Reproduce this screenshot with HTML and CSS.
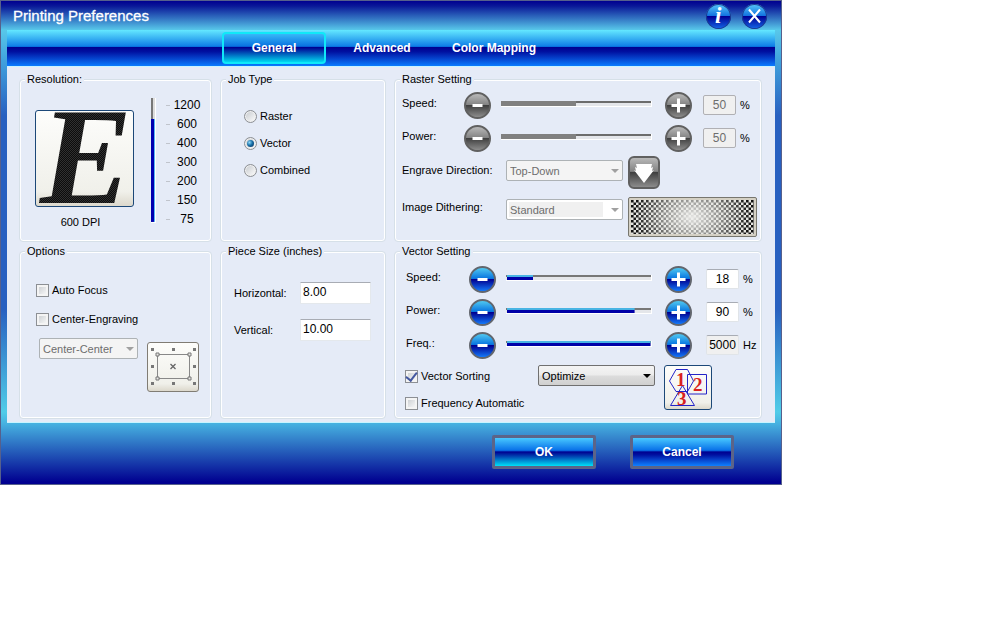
FILE: index.html
```html
<!DOCTYPE html>
<html lang="en">
<head>
<meta charset="utf-8">
<title>Printing Preferences</title>
<link rel="stylesheet" href="styles.css">
</head>
<body>
<main class="dialog">
  <header class="titlebar">
    <h1 class="title">Printing Preferences</h1>
    <button class="orb" type="button" aria-label="About">
      <svg width="25" height="25" viewBox="0 0 25 25"><text class="orb-i" x="9" y="19">i</text></svg>
    </button>
    <button class="orb" type="button" aria-label="Close">
      <svg width="25" height="25" viewBox="0 0 25 25"><path d="M7 5.500 18 18.500M18 5.500 7 18.500" stroke="#fff" stroke-width="2" fill="none"/></svg>
    </button>
  </header>

  <nav class="tabs">
    <button class="tab tab-active" type="button">General</button>
    <button class="tab" type="button">Advanced</button>
    <button class="tab" type="button">Color Mapping</button>
  </nav>

  <form class="panel">
    <fieldset class="group resolution">
      <legend>Resolution:</legend>
      <div class="preview">
        <button class="picture" type="button" aria-label="Resolution preview">
          <svg width="97" height="95" viewBox="0 0 97 95">
            <defs>
              <pattern id="grain" width="2" height="2" patternUnits="userSpaceOnUse">
                <rect width="2" height="2" fill="#303030"/>
                <rect width="1" height="1" fill="#0c0c0c"/>
                <rect x="1" y="1" width="1" height="1" fill="#0c0c0c"/>
              </pattern>
            </defs>
            <text class="letter" x="4" y="92" fill="url(#grain)">E</text>
          </svg>
        </button>
        <label for="dpi">600 DPI</label>
      </div>
      <input class="vslider" id="dpi" type="range" min="0" max="6" value="5" style="--v:83%">
      <ul class="scale">
        <li>1200</li><li>600</li><li>400</li><li>300</li><li>200</li><li>150</li><li>75</li>
      </ul>
    </fieldset>

    <fieldset class="group jobs">
      <legend>Job Type</legend>
      <label class="choice"><input type="radio" name="job">Raster</label>
      <label class="choice"><input type="radio" name="job" checked>Vector</label>
      <label class="choice"><input type="radio" name="job">Combined</label>
    </fieldset>

    <fieldset class="group raster">
      <legend>Raster Setting</legend>
      <div class="setting">
        <label for="rs">Speed:</label>
        <button class="round" type="button" disabled aria-label="Less raster speed"><svg width="23" height="23"><path d="M6.500 11.500h10" stroke="#fff" stroke-width="3"/></svg></button>
        <input class="slider" type="range" value="50" disabled aria-label="Raster speed" style="--v:50%">
        <button class="round" type="button" disabled aria-label="More raster speed"><svg width="23" height="23"><path d="M4.500 11.500h14M11.500 4.500v14" stroke="#fff" stroke-width="3"/></svg></button>
        <span class="amount"><input id="rs" type="text" value="50" disabled>%</span>
      </div>
      <div class="setting">
        <label for="rp">Power:</label>
        <button class="round" type="button" disabled aria-label="Less raster power"><svg width="23" height="23"><path d="M6.500 11.500h10" stroke="#fff" stroke-width="3"/></svg></button>
        <input class="slider" type="range" value="50" disabled aria-label="Raster power" style="--v:50%">
        <button class="round" type="button" disabled aria-label="More raster power"><svg width="23" height="23"><path d="M4.500 11.500h14M11.500 4.500v14" stroke="#fff" stroke-width="3"/></svg></button>
        <span class="amount"><input id="rp" type="text" value="50" disabled>%</span>
      </div>
      <div class="pick pick-direction">
        <label for="dir">Engrave Direction:</label>
        <span class="select"><select id="dir" disabled><option>Top-Down</option></select></span>
        <button class="arrow" type="button" disabled aria-label="Direction">
          <svg width="28" height="28" viewBox="0 0 28 28"><path d="M6 5h16l-1 4 2-1-1 4 2-1-10 13L4 11l2 1-1-4 2 1z" fill="#fff"/></svg>
        </button>
      </div>
      <div class="pick">
        <label for="dither">Image Dithering:</label>
        <span class="select"><select class="well" id="dither" disabled><option>Standard</option></select></span>
        <button class="dither" type="button" disabled aria-label="Dithering preview">
          <svg width="123" height="34">
            <defs>
              <pattern id="dots" width="5" height="5" patternUnits="userSpaceOnUse">
                <rect width="5" height="5" fill="#e4e4e0"/>
                <path d="M0 0h2.600v2.600H0zM2.500 2.500h2.600v2.600H2.500z" fill="#111"/>
              </pattern>
              <radialGradient id="glow">
                <stop offset="0" stop-color="#f0f0ee" stop-opacity=".95"/>
                <stop offset=".5" stop-color="#eaeae6" stop-opacity=".55"/>
                <stop offset="1" stop-color="#e4e4e0" stop-opacity="0"/>
              </radialGradient>
            </defs>
            <rect width="123" height="34" fill="url(#dots)"/>
            <ellipse cx="61" cy="17" rx="60" ry="40" fill="url(#glow)"/>
          </svg>
        </button>
      </div>
    </fieldset>

    <fieldset class="group options">
      <legend>Options</legend>
      <label class="choice"><input type="checkbox">Auto Focus</label>
      <label class="choice"><input type="checkbox">Center-Engraving</label>
      <div class="anchor">
        <span class="select"><select aria-label="Engraving position" disabled><option>Center-Center</option></select></span>
        <button class="picture picture-off" type="button" disabled aria-label="Position preview">
          <svg width="50" height="48" viewBox="0 0 50 48">
            <g fill="#777">
              <path d="M3 5h3v3H3zM24 5h3v3h-3zM45 5h3v3h-3zM3 22h3v3H3zM45 22h3v3h-3zM3 39h3v3H3zM24 39h3v3h-3zM45 39h3v3h-3z"/>
            </g>
            <path d="M9.500 11.500h32v24h-32z" fill="none" stroke="#888"/>
            <path d="M8 10h3v3H8zM40 10h3v3h-3zM8 34h3v3H8zM40 34h3v3h-3z" fill="#e8e8e4" stroke="#777"/>
            <path d="m22.500 21 5 5m0-5-5 5" stroke="#666" stroke-width="1.300"/>
          </svg>
        </button>
      </div>
    </fieldset>

    <fieldset class="group piece">
      <legend>Piece Size (inches)</legend>
      <label for="ph">Horizontal:</label><input id="ph" type="text" value="8.00">
      <label for="pv">Vertical:</label><input id="pv" type="text" value="10.00">
    </fieldset>

    <fieldset class="group vector">
      <legend>Vector Setting</legend>
      <div class="setting">
        <label for="vs">Speed:</label>
        <button class="round" type="button" aria-label="Less vector speed"><svg width="23" height="23"><path d="M6.500 11.500h10" stroke="#fff" stroke-width="3"/></svg></button>
        <input class="slider" type="range" value="18" aria-label="Vector speed" style="--v:18%">
        <button class="round" type="button" aria-label="More vector speed"><svg width="23" height="23"><path d="M4.500 11.500h14M11.500 4.500v14" stroke="#fff" stroke-width="3"/></svg></button>
        <span class="amount"><input id="vs" type="text" value="18">%</span>
      </div>
      <div class="setting">
        <label for="vp">Power:</label>
        <button class="round" type="button" aria-label="Less vector power"><svg width="23" height="23"><path d="M6.500 11.500h10" stroke="#fff" stroke-width="3"/></svg></button>
        <input class="slider" type="range" value="90" aria-label="Vector power" style="--v:88%">
        <button class="round" type="button" aria-label="More vector power"><svg width="23" height="23"><path d="M4.500 11.500h14M11.500 4.500v14" stroke="#fff" stroke-width="3"/></svg></button>
        <span class="amount"><input id="vp" type="text" value="90">%</span>
      </div>
      <div class="setting">
        <label for="vf">Freq.:</label>
        <button class="round" type="button" aria-label="Lower frequency"><svg width="23" height="23"><path d="M6.500 11.500h10" stroke="#fff" stroke-width="3"/></svg></button>
        <input class="slider" type="range" value="100" aria-label="Frequency" style="--v:99%">
        <button class="round" type="button" aria-label="Higher frequency"><svg width="23" height="23"><path d="M4.500 11.500h14M11.500 4.500v14" stroke="#fff" stroke-width="3"/></svg></button>
        <span class="amount"><input id="vf" class="readonly" type="text" value="5000" readonly>Hz</span>
      </div>
      <div class="sorting">
        <div class="checks">
          <label class="choice"><input type="checkbox" checked>Vector Sorting</label>
          <label class="choice"><input type="checkbox">Frequency Automatic</label>
        </div>
        <span class="select"><select aria-label="Sorting mode"><option>Optimize</option></select></span>
        <button class="picture" type="button" aria-label="Sorting preview">
          <svg width="46" height="43" viewBox="0 0 46 43">
            <g fill="none" stroke="#2424c8">
              <path d="M11 3.500h11.500L28.500 15 22.500 25.500H11L4.500 15z"/>
              <path d="M22.500 8.500h19v19.500h-19z"/>
              <path d="M17.500 19.500 29.500 39.500h-24z"/>
            </g>
            <g class="digits"><text x="11" y="20">1</text><text x="28" y="25">2</text><text x="12" y="39">3</text></g>
          </svg>
        </button>
      </div>
    </fieldset>
  </form>

  <footer class="actions">
    <button class="action action-default" type="button">OK</button>
    <button class="action" type="button">Cancel</button>
  </footer>
</main>
</body>
</html>
```
FILE: styles.css
```css
* { box-sizing: border-box; }
body {
  margin: 0;
  background: #fff;
  color: #000;
  font: 11px/14px "Liberation Sans", Arial, sans-serif;
}
button, input, select { font: inherit; color: inherit; margin: 0; padding: 0; }
svg { display: block; }

.dialog {
  max-width: 782px;
  border: 1px solid #56608c;
  background: linear-gradient(#000090 0, #0a1898 5px, #58c8ea 29px, #3f9fdc 62px, #2860c0 115px,
    #2860c0 calc(100% - 175px), #50cce8 calc(100% - 72px), #46b0e0 calc(100% - 60px), #000090 calc(100% - 2px));
}

/* Title bar */
.titlebar {
  display: flex;
  align-items: center;
  gap: 11px;
  height: 29px;
  padding: 1px 14px 0 12px;
}
.title { flex: 1; margin: 0; font-size: 15px; font-weight: 400; line-height: 18px; color: #fff; -webkit-text-stroke: 0.3px #fff; }
.orb {
  width: 25px;
  height: 25px;
  border: 0;
  border-radius: 50%;
  background: linear-gradient(#58c8f8 0, #1070e0 48%, #000094 50%, #1468e8 100%);
  box-shadow: inset 0 0 0 1px #1c3c90;
}
.orb-i { font: italic bold 23px "Liberation Serif", serif; fill: #fff; }

/* Tabs */
.tabs {
  display: flex;
  margin: 0 6px;
  padding: 2px 0 2px 215px;
  background: linear-gradient(#64e8ff 0, #1080e8 44%, #0468d8 47%, #000090 48%, #0010a0 60%, #0a7cff 100%);
}
.tab {
  min-width: 112px;
  height: 32px;
  border: 2px solid transparent;
  border-radius: 4px;
  background: none;
  color: #fff;
  font-size: 12px;
  font-weight: 700;
}
.tab-active {
  min-width: 104px;
  border-color: #10e8f8;
  background: linear-gradient(#38b8f8 0, #0870e0 44%, #000090 48%, #0030a8 60%, #00d8f0 100%);
}

/* Panel and groups */
.panel {
  display: grid;
  grid-template-columns: 193fr 166fr 368fr;
  column-gap: 8px;
  row-gap: 2px;
  margin: 0 6px;
  padding: 6px 13px 4px 12px;
  background: #e5ebf7;
  box-shadow: inset 0 1px #c8f4ff, inset 0 -1px #c8f4ff;
}
.group {
  --inset: 0px;
  min-width: 0;
  margin: 0;
  padding: 0 0 0 var(--inset);
  border: 1px solid #d6e0e8;
  border-radius: 4px;
  box-shadow: inset 0 0 0 1px #fff;
}
legend { margin-left: calc(5px - var(--inset)); padding: 0 2px; background: #e5ebf7; }

/* Resolution */
.resolution { --inset: 15px; display: flex; padding-right: 11px; }
.preview { display: grid; justify-items: center; align-content: start; gap: 8px; padding-top: 24px; }
.preview label { padding-right: 8px; }
.picture {
  border: 1px solid #1c4878;
  border-radius: 3px;
  background: linear-gradient(#fdfdfb, #f0f0ea 85%, #dcd8cc);
}
.letter { font: italic bold 138px "Liberation Serif", serif; }
.vslider {
  -webkit-appearance: none;
  appearance: none;
  writing-mode: vertical-lr;
  direction: rtl;
  width: 5px;
  height: 125px;
  margin: 12px 10px 0 17px;
  border: 1px solid #fff;
  border-width: 0 1px 1px 0;
  background:
    linear-gradient(90deg, #0000b0 0 3px, #58b8f0 3px) bottom / 100% var(--v) no-repeat,
    linear-gradient(90deg, #777 0 2px, #dcdcdc 2px);
}
.scale {
  flex: 1;
  list-style: none;
  margin: 10px 0 0;
  padding: 0;
  font-size: 12px;
  line-height: 19px;
}
.scale li { display: grid; grid-template-columns: 4px 34px; justify-items: center; align-items: center; }
.scale li::before { content: ""; width: 4px; height: 1px; background: #c0c4cc; }

/* Check boxes and radios */
.choice { display: flex; align-items: center; gap: 3px; }
.choice input {
  -webkit-appearance: none;
  appearance: none;
  display: grid;
  place-items: center;
  width: 13px;
  height: 13px;
  border: 1px solid #8c8f94;
  background: linear-gradient(135deg, #c4c8cc, #fff);
  box-shadow: inset 0 0 0 2px #f4f4f4;
}
.choice input[type="radio"] { border-radius: 50%; box-shadow: inset 0 0 0 1px #f0f0f0; }
.choice input[type="radio"]:checked::before {
  content: "";
  width: 7px;
  height: 7px;
  border-radius: 50%;
  background: radial-gradient(circle at 35% 35%, #90d8f8, #1870a8 45%, #0c2850);
}
.choice input[type="checkbox"]:checked::before {
  content: "";
  width: 5px;
  height: 9px;
  margin-bottom: 2px;
  border: solid #4458a0;
  border-width: 0 2px 2px 0;
  transform: rotate(38deg);
}
.choice input[type="checkbox"]:checked { grid-template: 11px / 11px; }
.jobs { --inset: 23px; padding-top: 23px; }
.jobs .choice { margin-bottom: 13px; }

/* Slider rows */
.raster { --inset: 7px; padding-top: 6px; padding-right: 4px; padding-bottom: 4px; }
.vector { --inset: 11px; padding-top: 8px; padding-right: 3px; padding-bottom: 8px; }
.setting {
  display: grid;
  grid-template-columns: 52px 27px 1fr 27px 55px;
  column-gap: 10px;
  align-items: center;
  margin-bottom: 6px;
}
.vector .setting { grid-template-columns: 53px 27px 1fr 27px 56px; }
.setting > label { padding-bottom: 5px; }
.round {
  display: grid;
  place-items: center;
  width: 27px;
  height: 27px;
  border: 2px solid #62666e;
  border-radius: 50%;
  background: linear-gradient(#50c8f0 0, #0874e0 46%, #000090 50%, #1478f8 100%);
}
.round:disabled, .arrow {
  border-color: #606060;
  background: linear-gradient(#b8b8b8 0, #848484 46%, #404040 50%, #8c8c8c 100%);
}
.slider {
  -webkit-appearance: none;
  appearance: none;
  width: auto;
  min-width: 0;
  height: 6px;
  margin: 0 3px 4px 0;
  border: solid #fff;
  border-width: 0 1px 1px 0;
  background:
    linear-gradient(#48b4e4 0 2px, #0000a8 2px) 1px 0 / var(--v) 100% no-repeat,
    linear-gradient(#777 0 2px, #e4e6ea 2px);
}
.slider:disabled {
  background:
    linear-gradient(#808080, #808080) 0 0 / var(--v) 100% no-repeat,
    linear-gradient(#6c6c6c 0 2px, #e4e6ea 2px);
}
.slider::-webkit-slider-thumb, .vslider::-webkit-slider-thumb { -webkit-appearance: none; width: 1px; height: 1px; background: none; }
.amount { display: flex; align-items: center; gap: 4px; padding: 0 0 2px 1px; }
.vector .amount { padding-left: 4px; }
.amount input {
  width: 33px;
  height: 20px;
  flex: none;
  border: 1px solid #e0e4e8;
  border-top-color: #a8acb4;
  border-radius: 2px;
  background: #fff;
  font-size: 12px;
  text-align: center;
}
.amount input:disabled { border: 1px solid #b0b0b4; background: #f0f0f0; color: #6d6d6d; }
.amount .readonly { background: #f0f0f0; }

/* Drop-downs */
.select { display: grid; align-items: center; }
.select select {
  -webkit-appearance: none;
  appearance: none;
  grid-area: 1 / 1;
  width: 100%;
  height: 21px;
  padding: 0 16px 0 3px;
  border: 1px solid #707070;
  border-radius: 2px;
  background: linear-gradient(#f4f4f4, #ececec 48%, #dcdcdc 52%, #d0d0d0);
}
.select::after {
  content: "";
  grid-area: 1 / 1;
  justify-self: end;
  margin-right: 4px;
  border: 4px solid transparent;
  border-top-color: #000;
  border-bottom: 0;
  pointer-events: none;
}
.select select:disabled { border-color: #adb2b5; background: #f4f4f4; color: #6d6d6d; opacity: 1; }
.select .well:disabled { background: linear-gradient(90deg, #f0f0f0 calc(100% - 19px), #fff calc(100% - 19px)); box-shadow: inset 0 0 0 2px #fff; }
.select:has(select:disabled)::after { border-top-color: #a0a0a0; }
.pick {
  display: grid;
  grid-template-columns: 1fr 117px 129px;
  column-gap: 5px;
  align-items: start;
  margin-bottom: 8px;
}
.pick:last-child { margin-bottom: 0; }
.pick label { padding-top: 3px; white-space: nowrap; }
.pick .select { padding-top: 2px; }
.pick-direction { margin-top: -2px; }
.pick-direction label { padding-top: 7px; }
.pick-direction .select { padding-top: 4px; }
.arrow {
  display: grid;
  place-items: center;
  width: 32px;
  height: 33px;
  border: 2px solid #606060;
  border-radius: 6px;
}
.dither { height: 40px; padding: 2px; border: 1px solid #77766e; border-radius: 2px; background: #d4d0c4; }
.dither svg { width: 100%; }

/* Options */
.options { --inset: 16px; padding-top: 25px; padding-right: 12px; }
.options .choice { margin-bottom: 15px; }
.anchor { display: grid; grid-template-columns: 99px 52px; gap: 9px; padding-left: 3px; align-items: start; margin-top: -3px; }
.picture-off { border-color: #807c74; margin-top: 4px; }

/* Piece size */
.piece {
  --inset: 13px;
  display: grid;
  grid-template-columns: 66px 71px;
  align-content: start;
  align-items: center;
  row-gap: 15px;
  padding-top: 24px;
}
.piece input {
  width: 100%;
  height: 22px;
  padding: 0 2px 2px;
  border: 1px solid #e4e8ec;
  border-top-color: #a8acb4;
  border-radius: 1px;
  background: #fff;
  font-size: 12px;
}

/* Sorting */
.sorting { display: grid; grid-template-columns: 1fr 117px 48px; column-gap: 9px; padding-right: 46px; align-items: start; }
.checks { display: grid; gap: 13px; padding-top: 4px; margin-left: -1px; }
.digits { font: bold 19px "Liberation Serif", serif; fill: #d82020; }

/* Footer */
.actions { display: flex; justify-content: flex-end; gap: 34px; padding: 12px 47px 15px; }
.action {
  width: 104px;
  height: 34px;
  border: 3px solid #5c6488;
  border-radius: 2px;
  background: linear-gradient(#48c8ff 0, #0870e8 44%, #000090 50%, #0010a0 60%, #1080ff 100%);
  color: #fff;
  font-size: 12px;
  font-weight: 700;
}
.action-default { background: linear-gradient(#48c8ff 0, #0870e8 44%, #000090 50%, #0040b0 65%, #00e0f8 100%); }
```
